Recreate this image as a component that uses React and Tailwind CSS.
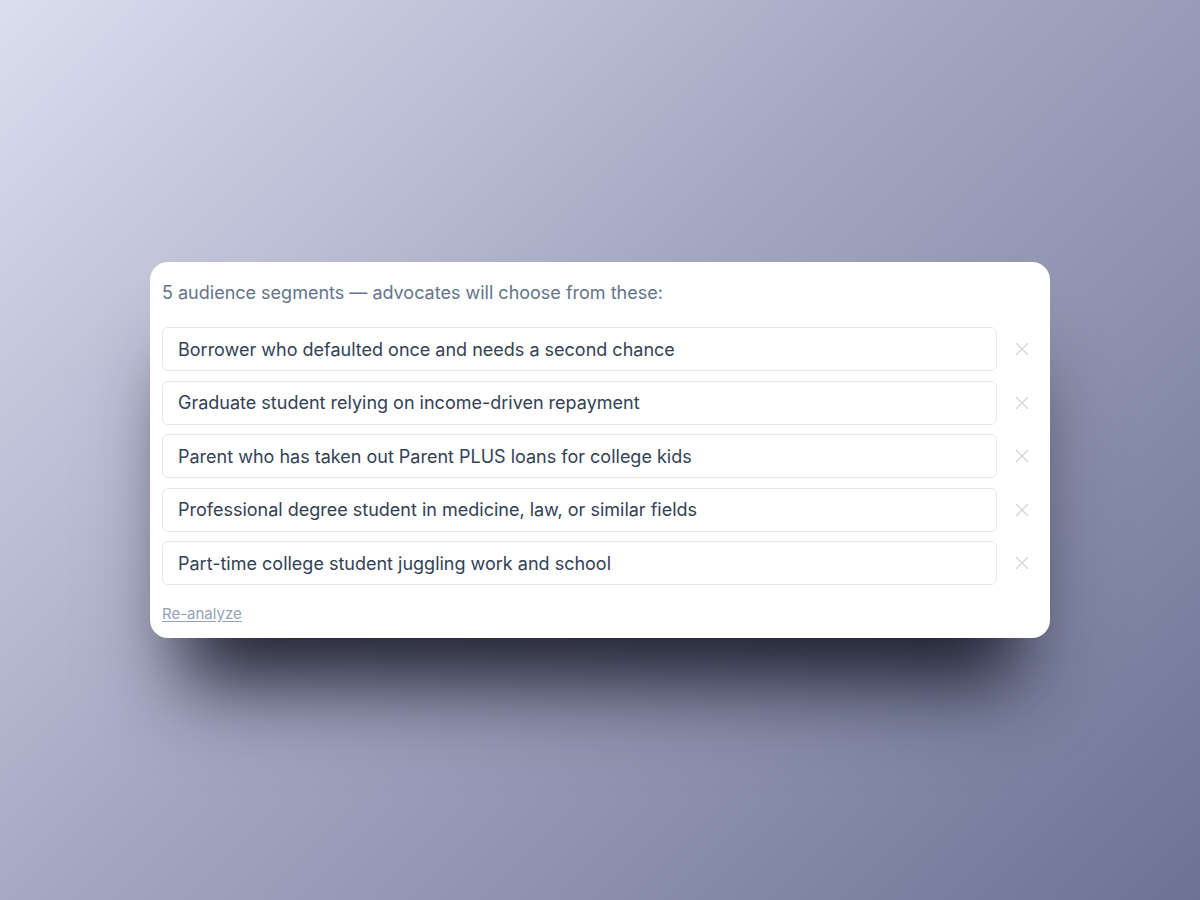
import React from "react";

const items = [
  "Borrower who defaulted once and needs a second chance",
  "Graduate student relying on income-driven repayment",
  "Parent who has taken out Parent PLUS loans for college kids",
  "Professional degree student in medicine, law, or similar fields",
  "Part-time college student juggling work and school",
];

export default function App() {
  return (
    <div
      className="w-[1200px] h-[900px] flex items-center justify-center bg-[linear-gradient(135deg,#dbdeee_0%,#a4a7c2_45%,#8c90ad_70%,#6c7394_100%)]"
      style={{ fontFamily: "Inter, 'Noto Sans', sans-serif" }}
    >
      <div className="w-[900px] h-[376px] bg-white rounded-[18px] px-3 pt-[19px] pb-3 shadow-[0_75px_75px_-30px_rgba(18,20,32,0.9)] flex flex-col">
        <div className="text-[18px] leading-6 text-[#64748b]">
          5 audience segments — advocates will choose from these:
        </div>
        <div className="mt-[22px] flex flex-col gap-[9.5px]">
          {items.map((t) => (
            <div key={t} className="flex items-center gap-2">
              <div className="flex-1 h-[44px] border-[1.5px] border-[#e2e8f0] rounded-[6px] px-[15px] flex items-center text-[18px] text-[#334155]">
                <span>{t}</span>
              </div>
              <button className="w-[32px] h-[32px] flex items-center justify-center text-[#d1d5db] ml-[1px]">
                <svg width="14" height="14" viewBox="0 0 14 14" fill="none" stroke="currentColor" strokeWidth="1.3" strokeLinecap="round">
                  <path d="M1.5 1.5L12.5 12.5M12.5 1.5L1.5 12.5" />
                </svg>
              </button>
            </div>
          ))}
        </div>
        <div className="mt-[18px] leading-5">
          <span className="text-[15px] text-[#94a3b8] underline underline-offset-2">Re-analyze</span>
        </div>
      </div>
    </div>
  );
}
